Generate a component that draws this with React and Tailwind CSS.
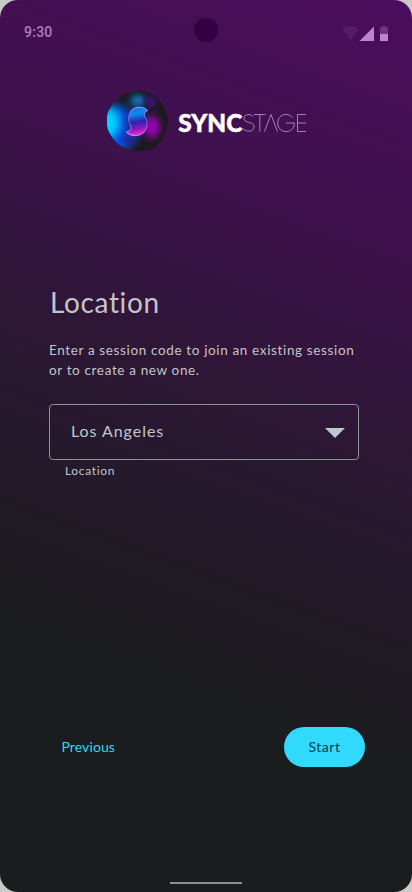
import React from 'react';

function StatusBar() {
  return (
    <header className="relative flex h-[52px] items-start justify-between pl-6 pr-6 pt-[24px]">
      <span className="font-[Roboto,sans-serif] text-[14px] leading-[17px] font-medium tracking-[0.250px] text-[#b07fbe]">9:30</span>
      <span className="absolute left-[194px] top-[18px] size-6 rounded-full bg-[#330041]" />
      <svg className="mt-[1px] h-4 w-[46px]" viewBox="342 25 46 16">
        <path d="M342 29.2Q350.500 22.800 359 29.200L350.500 40.500Z" fill="#561b66" />
        <path d="M359.500 41L374 26.500V41Z" fill="#bd84ca" />
        <path d="M380 27.300H382V26H386V27.300H388V34H380Z" fill="#713280" />
        <path d="M380 34H388V41H380Z" fill="#bd84ca" />
      </svg>
    </header>
  );
}

function Logo() {
  return (
    <svg className="ml-[106px] mt-[38px] block h-[62px] w-[202px] shrink-0" viewBox="106 90 202 62">
      <defs>
        <clipPath id="orb">
          <path d="M107 118C107 111 112 105 116 100C121 94 130 91 137 91C148 91 155 94 160 101C164 106 167 112 167.500 119C168 127 165 135 161 141C156 148 148 151 138 151C128 151 120 147 115 141C111 136 107 130 107 124Z" />
        </clipPath>
        <filter id="soft" x="-60%" y="-60%" width="220%" height="220%"><feGaussianBlur stdDeviation="5" /></filter>
        <filter id="softer" x="-60%" y="-60%" width="220%" height="220%"><feGaussianBlur stdDeviation="3.500" /></filter>
        <linearGradient id="swirl" x1="0" y1="0" x2="0.150" y2="1">
          <stop offset="0" stopColor="#2864e8" />
          <stop offset="0.300" stopColor="#078dec" />
          <stop offset="0.580" stopColor="#2d22a8" />
          <stop offset="0.850" stopColor="#9a16c2" />
          <stop offset="1" stopColor="#d431cf" />
        </linearGradient>
        <linearGradient id="rim" x1="0" y1="0" x2="0" y2="1">
          <stop offset="0" stopColor="#7aa8f5" />
          <stop offset="0.500" stopColor="#6a5ad4" />
          <stop offset="1" stopColor="#e078e3" />
        </linearGradient>
      </defs>
      <g clipPath="url(#orb)">
        <rect x="106" y="90" width="63" height="62" fill="#1c1a1c" />
        <ellipse cx="117" cy="129" rx="17" ry="24" fill="#0653e8" filter="url(#soft)" />
        <ellipse cx="107" cy="123" rx="13" ry="16" fill="#00d5ff" filter="url(#soft)" />
        <ellipse cx="138" cy="101" rx="7" ry="6" fill="#0c7fd8" filter="url(#softer)" />
        <ellipse cx="151" cy="102" rx="5" ry="7" fill="#421181" filter="url(#softer)" />
        <ellipse cx="136" cy="122" rx="11" ry="13" fill="#1c2fa8" filter="url(#softer)" />
        <ellipse cx="152" cy="127" rx="8" ry="11" fill="#9b00b6" filter="url(#softer)" />
        <ellipse cx="130" cy="139" rx="9" ry="6" fill="#2a208e" filter="url(#soft)" />
      </g>
      <path d="M147.500 110.500C143.500 106.200 135 106 131 111C127.800 115.500 128 121.500 130.500 125C132 128.500 131 131.200 126.500 132C131 136.700 140 137 144.500 131.500C148.200 126.500 147.800 120.500 145 117C143.500 114.700 144.200 111.500 147.500 110.500Z" fill="url(#swirl)" stroke="url(#rim)" strokeWidth="1.100" strokeLinejoin="round" />
      <text x="178.300" y="131.500" textLength="64" lengthAdjust="spacingAndGlyphs" fill="#fff" stroke="#fff" strokeWidth="0.500" className="font-[Lato,sans-serif] text-[24px] font-black">SYNC</text>
      <g fill="none" stroke="#c3aac8" strokeWidth="0.750">
        <path d="M253 116.700C250.500 113.500 244.500 113.800 244 118C243.600 124.200 254 120.500 254 127C253.800 132.300 245.500 132.700 242.500 127.800M254 114.500H265.500M259.800 114.500V131.500M264.500 131.500L271 114.500L277.500 131.500M292.500 117.500C287.500 111.700 277.700 114.500 277.700 123C277.700 134.500 294.800 134.500 294.300 123H286M306 114.500H297.500V131.500H306M297.500 123H306" />
      </g>
    </svg>
  );
}

export default function App() {
  return (
    <div className="h-[892px] w-[412px] overflow-hidden bg-[#c9c9c9]">
      <div className="flex h-full flex-col rounded-[18px] bg-[linear-gradient(200deg,#4b0d5e_0%,#3d114b_25%,#2b1733_46%,#221a28_60%,#1d1c20_70%,#191d1d_78%,#191d1d_100%)] font-[Lato,sans-serif] text-[#c5c4c8]">
        <StatusBar />
        <Logo />
        <main className="ml-[49px] mt-[132px] w-[310px]">
          <h1 className="pl-px text-[28px] leading-9 tracking-[0.650px]">Location</h1>
          <p className="mt-[20px] whitespace-nowrap text-[13.500px] leading-5">
            <span className="block tracking-[0.640px]">Enter a session code to join an existing session</span>
            <span className="block tracking-[0.640px]">or to create a new one.</span>
          </p>
          <button className="mt-[24px] flex h-14 w-full items-center justify-between rounded-[4px] border border-[#899294] pl-[21px] pr-[13px] text-[#bfc8ca]">
            <span className="pb-[2px] text-[16px] leading-6 tracking-[0.950px]">Los Angeles</span>
            <svg className="mt-[2px] h-[10px] w-5" viewBox="0 0 20 10"><path d="M0 0H20L10 10Z" fill="#bfc8ca" /></svg>
          </button>
          <p className="mt-[3px] pl-4 text-[12px] leading-4 tracking-[0.650px] text-[#bfc8ca]">Location</p>
        </main>
        <nav className="mt-[248px] flex h-10 items-center justify-between pl-[61.500px] pr-[47px]">
          <button className="text-[14px] leading-5 tracking-[0.100px] text-[#31d8f8]">Previous</button>
          <button className="h-10 w-[81px] rounded-full bg-[#31dafc] text-[14px] leading-5 tracking-[0.500px] text-[#07404b]">Start</button>
        </nav>
        <div className="mx-auto mb-[8px] mt-auto h-[2px] w-[72px] bg-[#8b8f8f]" />
      </div>
    </div>
  );
}
